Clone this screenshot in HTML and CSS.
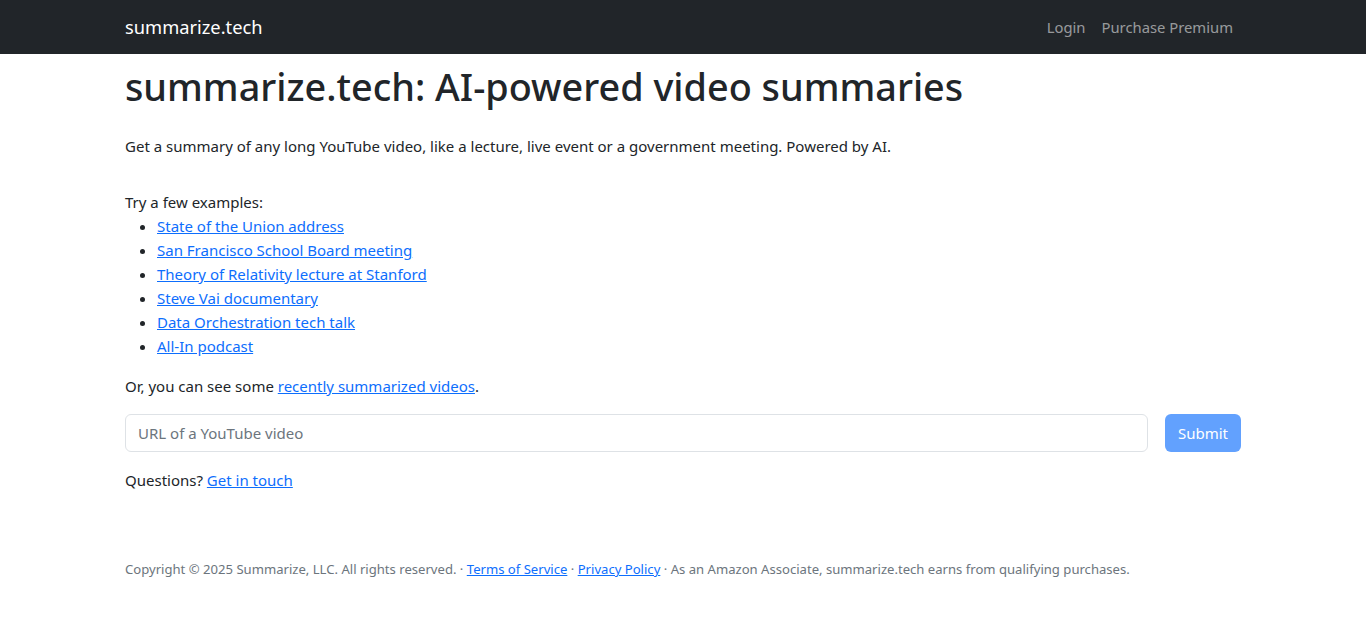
FILE: index.html
```html
<!DOCTYPE html>
<html lang="en">
<head>
<meta charset="utf-8">
<title>summarize.tech: AI-powered video summaries</title>
<link rel="stylesheet" href="styles.css">
</head>
<body>
<nav class="navbar">
  <div class="container nav-inner">
    <a class="brand" href="#">summarize.tech</a>
    <ul class="nav-links">
      <li><a href="#">Login</a></li>
      <li><a href="#">Purchase Premium</a></li>
    </ul>
  </div>
</nav>
<main class="container">
  <h1 class="title">summarize.tech: AI-powered video summaries</h1>
  <p class="lead-text">Get a summary of any long YouTube video, like a lecture, live event or a government meeting. Powered by AI.</p>
  <div class="examples">
    Try a few examples:
    <ul class="example-list">
      <li><a href="#">State of the Union address</a></li>
      <li><a href="#">San Francisco School Board meeting</a></li>
      <li><a href="#">Theory of Relativity lecture at Stanford</a></li>
      <li><a href="#">Steve Vai documentary</a></li>
      <li><a href="#">Data Orchestration tech talk</a></li>
      <li><a href="#">All-In podcast</a></li>
    </ul>
  </div>
  <p class="recent">Or, you can see some <a href="#">recently summarized videos</a>.</p>
  <form class="url-form">
    <input class="url-input" type="text" placeholder="URL of a YouTube video">
    <button class="submit-btn" type="button" disabled>Submit</button>
  </form>
  <p class="questions">Questions? <a href="#">Get in touch</a></p>
  <footer class="footer">
    Copyright © 2025 Summarize, LLC. All rights reserved. · <a href="#">Terms of Service</a> · <a href="#">Privacy Policy</a> · As an Amazon Associate, summarize.tech earns from qualifying purchases.
  </footer>
</main>
</body>
</html>
```
FILE: styles.css
```css
* { box-sizing: border-box; }
html, body { margin: 0; padding: 0; }
body {
  font-family: "Noto Sans", "Open Sans", sans-serif;
  font-size: 15px;
  line-height: 24px;
  color: #212529;
  background: #fff;
}
a { color: #0d6efd; text-decoration: underline; }
.container {
  width: 1140px;
  margin: 0 auto;
  padding: 0 12px;
}
.navbar {
  background: #212529;
  height: 54px;
}
.nav-inner {
  display: flex;
  align-items: center;
  justify-content: space-between;
  height: 54px;
}
.brand {
  color: #fff;
  text-decoration: none;
  font-size: 18.3px;
  line-height: 30px;
}
.nav-links {
  list-style: none;
  margin: 0;
  padding: 0;
  display: flex;
}
.nav-links a {
  display: block;
  padding: 8px;
  color: rgba(255,255,255,.55);
  text-decoration: none;
  font-size: 14.8px;
}
.title {
  font-size: 37.8px;
  font-weight: 500;
  line-height: 46px;
  margin: 10px 0 0;
}
.lead-text {
  margin: 24px 0 0;
}
.examples {
  margin-top: 32px;
}
.example-list {
  margin: 0;
  padding-left: 32px;
}
.recent {
  margin: 16px 0 0;
}
.url-form {
  display: flex;
  gap: 17px;
  margin-top: 16px;
}
.url-input {
  flex: 1;
  height: 38px;
  border: 1px solid #dee2e6;
  border-radius: 6px;
  padding: 6px 12px;
  font: inherit;
  color: #212529;
}
.url-input::placeholder { color: #6c757d; opacity: 1; }
.submit-btn {
  width: 76px;
  height: 38px;
  border: none;
  border-radius: 6px;
  background: #62a1fe;
  color: #fff;
  font: inherit;
}
.questions {
  margin: 16px 0 0;
}
.footer {
  margin-top: 67px;
  font-size: 13.1px;
  line-height: 21px;
  color: #6c757d;
}
```
